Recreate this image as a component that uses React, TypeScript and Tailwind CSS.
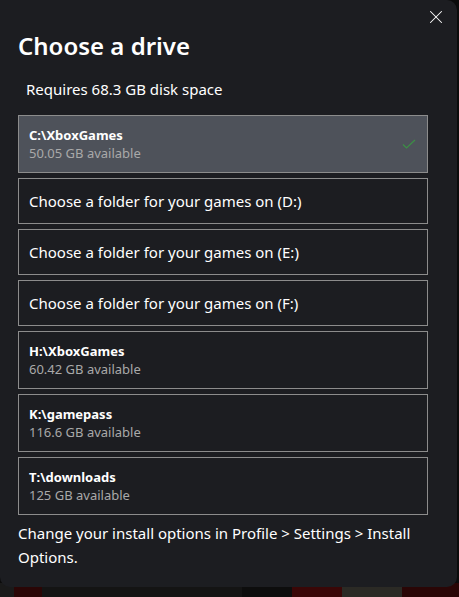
import { X } from "lucide-react";

type Drive = {
  path?: string;
  free?: string;
  label?: string;
  selected?: boolean;
};

const drives: Drive[] = [
  { path: "C:\\XboxGames", free: "50.05 GB available", selected: true },
  { label: "Choose a folder for your games on (D:)" },
  { label: "Choose a folder for your games on (E:)" },
  { label: "Choose a folder for your games on (F:)" },
  { path: "H:\\XboxGames", free: "60.42 GB available" },
  { path: "K:\\gamepass", free: "116.6 GB available" },
  { path: "T:\\downloads", free: "125 GB available" },
];

function DriveRow({ drive }: { drive: Drive }) {
  return (
    <button
      className={
        "flex w-full items-center border border-[#8c8c8c] px-[10px] text-left " +
        (drive.selected ? "h-[58px] bg-[#4e525a]" : drive.path ? "h-[58px] bg-transparent" : "h-[46px] bg-transparent")
      }
    >
      {drive.path ? (
        <div className="flex flex-1 flex-col">
          <span className="text-[13px] font-bold leading-[18px] text-white">{drive.path}</span>
          <span className="text-[13px] leading-[18px] text-[#a9a9a9]">{drive.free}</span>
        </div>
      ) : (
        <span className="flex-1 text-[15px] text-white">{drive.label}</span>
      )}
      {drive.selected ? (
        <svg width="14" height="10" viewBox="0 0 14 10" className="mr-[1px]">
          <path d="M1 5.5 L4.5 9 L13 1" fill="none" stroke="#3c8f45" strokeWidth="1.2" />
        </svg>
      ) : null}
    </button>
  );
}

export default function App() {
  return (
    <div
      className="relative h-[597px] w-[459px] overflow-hidden bg-[#0b0b0b]"
      style={{ fontFamily: '"Noto Sans", "Open Sans", sans-serif' }}
    >
      {/* backdrop peeking under the dialog */}
      <div className="absolute bottom-0 left-0 flex h-[14px] w-full">
        <div className="w-[14px] bg-[#1a1a1a]" />
        <div className="w-[28px] bg-[#2a0606]" />
        <div className="w-[200px] bg-[#141414]" />
        <div className="w-[50px] bg-[#0d0d0d]" />
        <div className="w-[50px] bg-[#3a0707]" />
        <div className="w-[60px] bg-[#2b2a25]" />
        <div className="flex-1 bg-[#2a0606]" />
      </div>

      <div className="relative h-[587px] w-[457px] rounded-b-[10px] rounded-tr-[10px] bg-[#1c1d21] pl-[18px] pr-[29px]">
        <button className="absolute right-[10px] top-[6px] text-white">
          <X size={22} strokeWidth={1.1} />
        </button>

        <h1 className="pt-[30px] text-[24px] font-semibold leading-[32px] text-white">Choose a drive</h1>
        <p className="mt-[17px] pl-[8px] text-[15px] leading-[20px] text-white">Requires 68.3 GB disk space</p>

        <div className="mt-[16px] flex flex-col gap-[5px]">
          {drives.map((d, i) => (
            <DriveRow key={i} drive={d} />
          ))}
        </div>

        <p className="mt-[6px] text-[15px] leading-[24px] text-white">
          Change your install options in Profile &gt; Settings &gt; Install Options.
        </p>
      </div>
    </div>
  );
}
